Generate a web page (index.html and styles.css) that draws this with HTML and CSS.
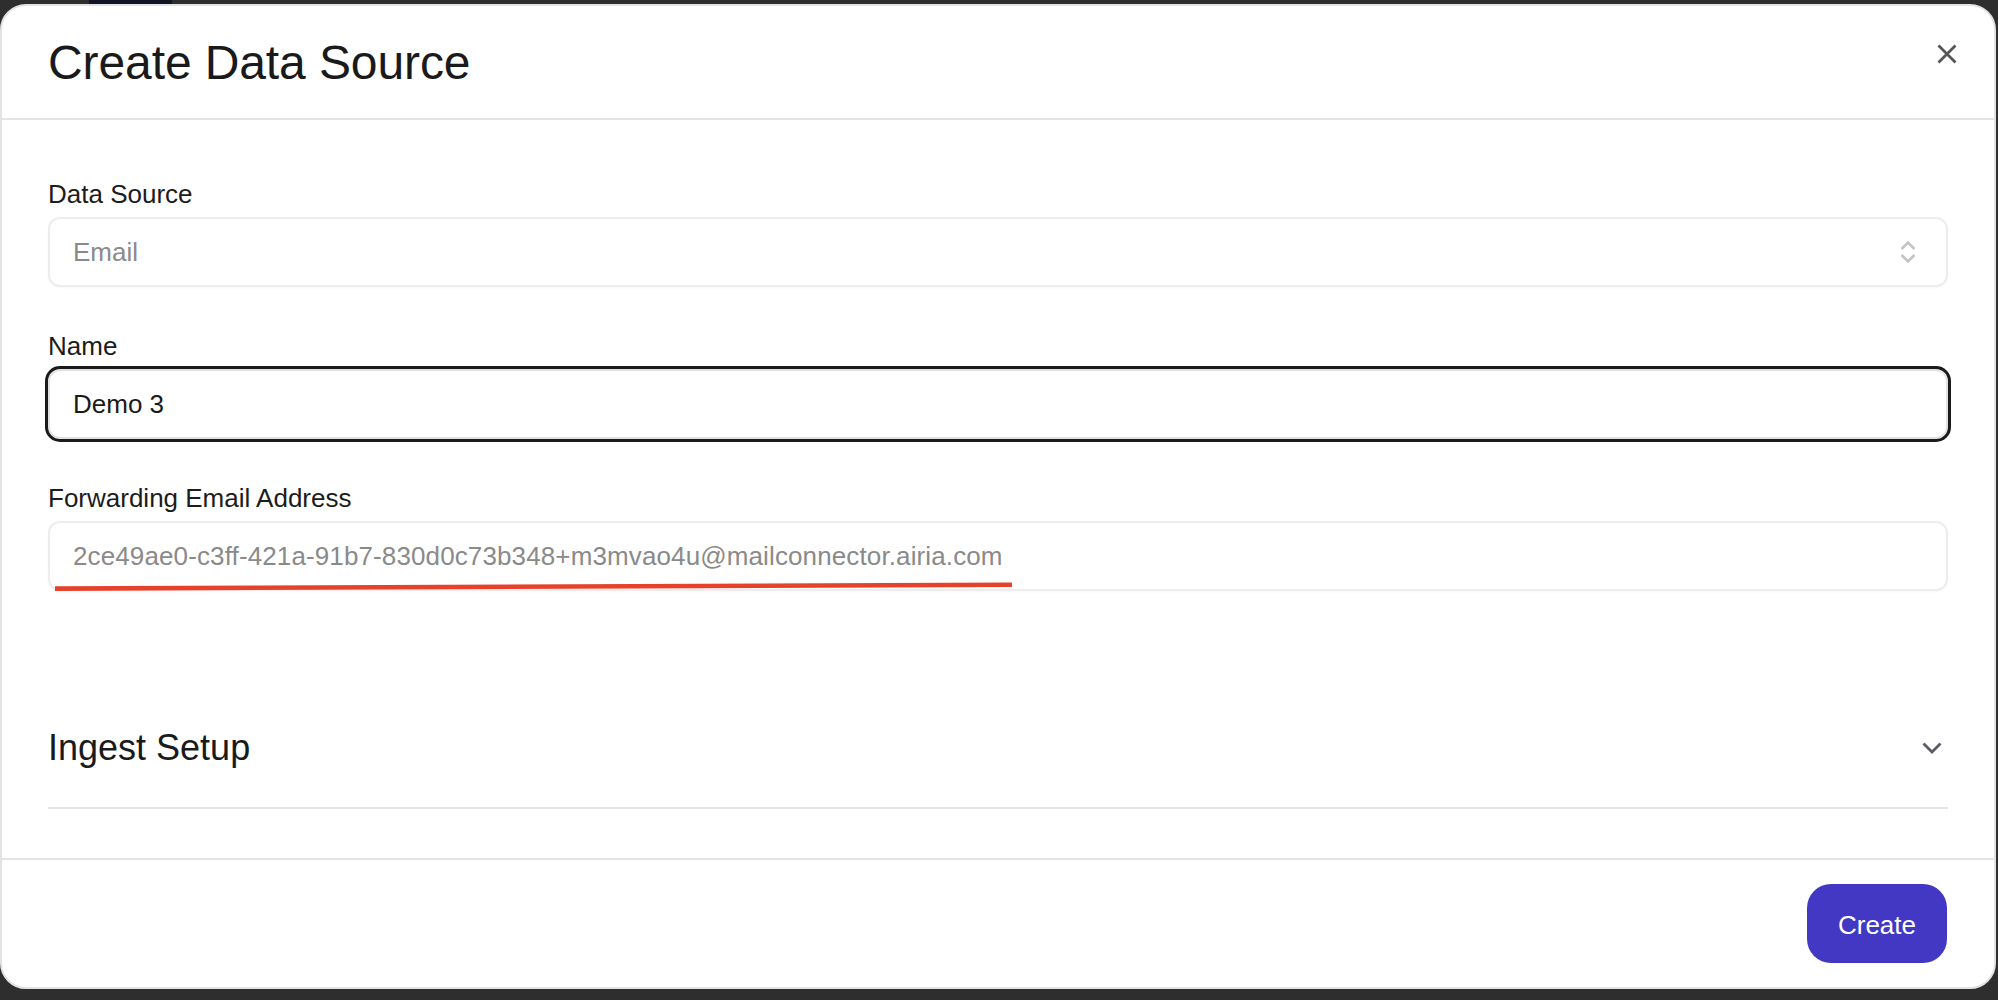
FILE: index.html
```html
<!DOCTYPE html>
<html lang="en">
<head>
<meta charset="utf-8">
<title>Create Data Source</title>
<link rel="stylesheet" href="styles.css">
</head>
<body>
<div class="modal">
  <header class="modal-header">
    <h1 class="modal-title">Create Data Source</h1>
    <button class="close-btn" aria-label="Close">
      <svg width="20" height="20" viewBox="0 0 20 20"><path d="M1.5 1.5 L18.5 18.5 M18.5 1.5 L1.5 18.5" stroke="#555" stroke-width="2.8" fill="none" stroke-linecap="butt"/></svg>
    </button>
  </header>
  <main class="modal-body">
    <div class="fields">
      <div class="field">
        <label class="field-label">Data Source</label>
        <div class="box box-select">
          <span class="box-text muted">Email</span>
          <svg class="updown" width="16" height="24" viewBox="0 0 16 24"><path d="M1.5 9 L8 2.5 L14.5 9 M1.5 15 L8 21.5 L14.5 15" stroke="#c4c4c4" stroke-width="2.6" fill="none"/></svg>
        </div>
      </div>
      <div class="field">
        <label class="field-label">Name</label>
        <div class="box box-focus">
          <span class="box-text">Demo 3</span>
        </div>
      </div>
      <div class="field">
        <label class="field-label">Forwarding Email Address</label>
        <div class="box box-email">
          <span class="box-text muted email-text">2ce49ae0-c3ff-421a-91b7-830d0c73b348+m3mvao4u@mailconnector.airia.com</span>
          <svg class="annotation" width="960" height="12" viewBox="0 0 960 12"><path d="M0 8.6 L957 4.8" stroke="#e5412b" stroke-width="4.6" fill="none"/></svg>
        </div>
      </div>
    </div>
    <section class="ingest">
      <h2 class="ingest-title">Ingest Setup</h2>
      <svg class="chev" width="20" height="12" viewBox="0 0 20 12"><path d="M1.5 1.5 L10 10 L18.5 1.5" stroke="#5b5b66" stroke-width="2.8" fill="none"/></svg>
    </section>
  </main>
  <footer class="modal-footer">
    <button class="create-btn">Create</button>
  </footer>
</div>
</body>
</html>
```
FILE: styles.css
```css
html, body {
  margin: 0;
  padding: 0;
}
body {
  width: 1998px;
  height: 1000px;
  overflow: hidden;
  background:
    linear-gradient(to right, transparent 89px, #121424 89px, #121424 172px, transparent 172px) top left / 100% 4px no-repeat,
    #2e2e2e;
  font-family: "Liberation Sans", Arial, Helvetica, sans-serif;
  color: #1b1b1b;
  padding-top: 4px;
  box-sizing: border-box;
}
.modal {
  width: 1996px;
  height: 985px;
  box-sizing: border-box;
  border: 2px solid #e3e3e3;
  border-radius: 26px;
  background: #fff;
  display: flex;
  flex-direction: column;
  overflow: hidden;
}
.modal-header {
  height: 114px;
  box-sizing: border-box;
  padding: 29px 37px 0 46px;
  border-bottom: 2px solid #e4e4e4;
  display: flex;
  justify-content: space-between;
  align-items: flex-start;
}
.modal-title {
  margin: 0;
  font-size: 48px;
  line-height: 56px;
  font-weight: 400;
  color: #1a1a1a;
  letter-spacing: -0.1px;
}
.close-btn {
  margin-top: 9px;
  padding: 0;
  border: none;
  background: none;
  width: 20px;
  height: 20px;
  display: block;
}
.close-btn svg { display: block; }
.modal-body {
  flex: 1;
  padding: 58px 46px 0 46px;
}
.fields {
  display: flex;
  flex-direction: column;
  gap: 43px;
}
.field {
  display: flex;
  flex-direction: column;
  gap: 7px;
}
.field-label {
  font-size: 26px;
  line-height: 32px;
  color: #1c1c1c;
}
.box {
  position: relative;
  height: 70px;
  box-sizing: border-box;
  border: 2px solid #ededed;
  border-radius: 12px;
  background: #fff;
  padding: 0 30px 0 23px;
  display: flex;
  align-items: center;
  justify-content: space-between;
  box-shadow: 0 1px 2px rgba(0, 0, 0, 0.03);
}
.box-focus {
  border-color: #e2e2e2;
  box-shadow: 0 0 0 3px #1a1a1a;
}
.box-text {
  font-size: 26px;
  line-height: 32px;
  color: #1a1a1a;
  white-space: nowrap;
}
.box-text.muted {
  color: #8a8a8a;
}
.email-text {
  letter-spacing: 0.12px;
}
.updown { display: block; }
.annotation {
  position: absolute;
  left: 5px;
  top: 57px;
  overflow: visible;
}
.ingest {
  margin-top: 133px;
  padding: 0 6px 35px 0;
  border-bottom: 2px solid #e4e4e4;
  display: flex;
  justify-content: space-between;
  align-items: center;
}
.ingest-title {
  margin: 0;
  font-size: 36px;
  line-height: 48px;
  font-weight: 400;
  color: #1a1a1a;
}
.chev { display: block; }
.modal-footer {
  height: 129px;
  box-sizing: border-box;
  border-top: 2px solid #e4e4e4;
  padding: 0 47px 0 0;
  display: flex;
  justify-content: flex-end;
  align-items: center;
}
.create-btn {
  width: 140px;
  height: 79px;
  border: none;
  border-radius: 24px;
  background: #4338c4;
  color: #fff;
  font-family: "Liberation Sans", Arial, Helvetica, sans-serif;
  font-size: 26px;
  padding: 3px 0 0 0;
}
```
